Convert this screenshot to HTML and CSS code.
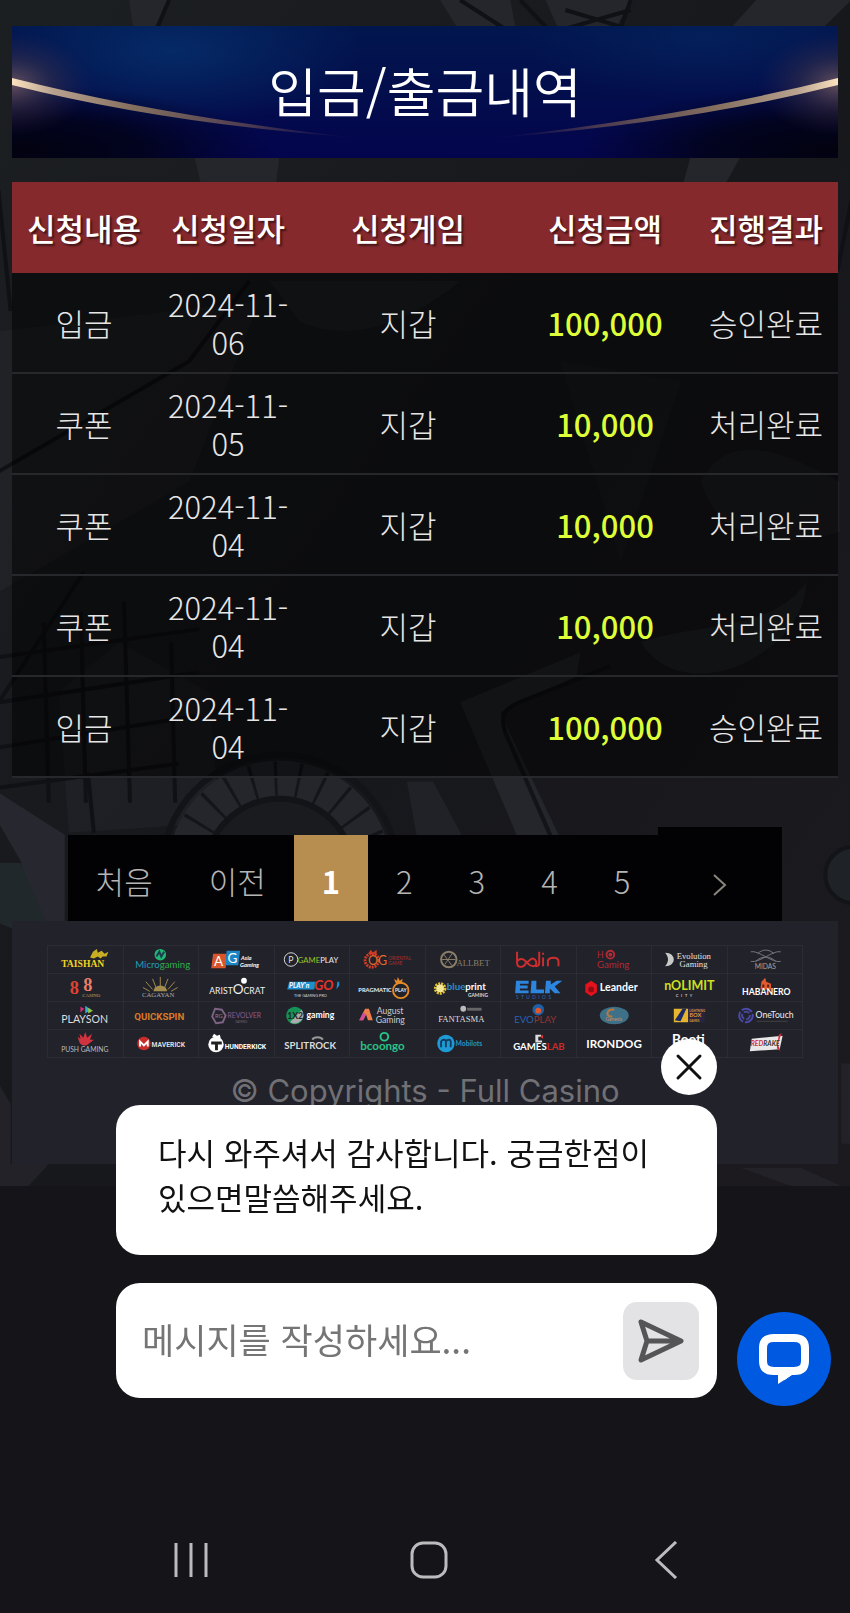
FILE: index.html
```html
<!DOCTYPE html>
<html lang="ko">
<head>
  <meta charset="UTF-8">
  <meta name="viewport" content="width=device-width, initial-scale=1">
  <title>입금/출금내역 - Full Casino</title>
  <link rel="stylesheet" href="styles.css">
</head>
<body>
  <div class="page">
    <!-- 배경 그림 -->
    <svg class="page-bg" viewBox="0 0 850 1182" preserveAspectRatio="xMidYMin slice" aria-hidden="true">
      <defs>
        <linearGradient id="bgShade" x1="0" y1="0" x2="1" y2="1">
          <stop offset="0" stop-color="#1c1f22"/>
          <stop offset="0.5" stop-color="#17181c"/>
          <stop offset="1" stop-color="#1c1a1e"/>
        </linearGradient>
      </defs>
      <rect width="850" height="1182" fill="url(#bgShade)"/>
      <g fill="#24262b">
        <path d="M130 0h40l-18 40h-16z"/>
        <path d="M440 0h70l8 42h-52z"/>
        <path d="M545 0h85l-22 42h-44z"/>
        <path d="M755 0l-38 42h90l43-42z"/>
        <path d="M195 155h85l-5 40-70 2z"/>
        <path d="M690 155l50 0-20 36h-40z"/>
        <path d="M0 590L190 480 260 300 0 330z" opacity=".6"/>
        <path d="M270 280h190c-60 50-120 60-160 40z" opacity=".7"/>
        <path d="M60 690l60-50 90 50 10 130-150 10z" opacity=".5"/>
        <path d="M560 360l120 20-60 180z" opacity=".4"/>
        <path d="M640 640c60-20 130-10 165-60 0 70-120 130-165 60z" opacity=".9"/>
        <path d="M700 480c30-60 100-20 138 0v50c-60 20-120 10-138-50z" opacity=".6"/>
        <path d="M460 700l120-50-4 24-76 36 60 126h-42z"/>
        <path d="M0 790l66 42 0 88H40L22 858 0 820z" fill="#26272f"/>
        <path d="M0 860h22l26 62-12 12L0 920z" fill="#20282b"/>
        <path d="M433 779l30 56h-46l-10-56z" fill="#202228"/>
      </g>
      <g fill="none" stroke="#101114" stroke-width="4">
        <path d="M170 0l-18 42M460 0l62 40M520 0l40 42M565 10l60 18M560 30l70-20M630 0l-15 42M0 190l12 120M850 200l-14 70"/>
        <path d="M85 570l-85 130M45 620l5 180M82 610l5 190M125 600l6 200M172 640l4 160M0 655l200-28M0 700l200-30M0 745l200-32M0 785l180-24M95 830l-6-60"/>
        <path d="M0 470l190-110 60-80M505 730c-6-18 0-24 14-30l90-36"/>
        <path d="M505 730l46 105" stroke="#131417"/>
      </g>
      <circle cx="280" cy="870" r="112" fill="#24262c"/>
      <circle cx="280" cy="870" r="94" fill="none" stroke="#14151a" stroke-width="34" stroke-dasharray="3 20"/>
      <circle cx="280" cy="870" r="118" fill="none" stroke="#131417" stroke-width="6"/>
      <circle cx="280" cy="870" r="74" fill="#1a1b1e" stroke="#131417" stroke-width="6"/>
      <circle cx="852" cy="872" r="28" fill="#1f2226" stroke="#131417" stroke-width="4"/>
      <path d="M0 1080l12 20v60H0zM840 1060h10v80h-10zM740 1164l60 0 40 18h-50zM0 1160h50l-20 22H0z" fill="#222228"/>
    </svg>

    <header class="banner">
      <svg class="banner-bg" viewBox="0 0 826 132" preserveAspectRatio="none" aria-hidden="true">
        <defs>
          <linearGradient id="navy" x1="0" y1="0" x2="0" y2="1">
            <stop offset="0" stop-color="#02164e"/>
            <stop offset="0.55" stop-color="#030d4c"/>
            <stop offset="1" stop-color="#03044e"/>
          </linearGradient>
          <radialGradient id="blueGlow">
            <stop offset="0" stop-color="#052a66"/>
            <stop offset="1" stop-color="#052a66" stop-opacity="0"/>
          </radialGradient>
          <radialGradient id="dark">
            <stop offset="0" stop-color="#02020f"/>
            <stop offset="0.5" stop-color="#02031a" stop-opacity=".9"/>
            <stop offset="1" stop-color="#02041f" stop-opacity="0"/>
          </radialGradient>
          <radialGradient id="warm">
            <stop offset="0" stop-color="#8d6c66" stop-opacity=".7"/>
            <stop offset="0.5" stop-color="#4a3a48" stop-opacity=".4"/>
            <stop offset="1" stop-color="#33264a" stop-opacity="0"/>
          </radialGradient>
          <linearGradient id="beam" x1="0" y1="0" x2="1" y2="0">
            <stop offset="0" stop-color="#fbe3c0"/>
            <stop offset="0.12" stop-color="#b8a18e"/>
            <stop offset="0.35" stop-color="#85705f"/>
            <stop offset="0.7" stop-color="#4a3950"/>
            <stop offset="1" stop-color="#2b1c55" stop-opacity="0"/>
          </linearGradient>
          <g id="side">
            <ellipse cx="0" cy="125" rx="260" ry="66" fill="url(#dark)"/>
            <ellipse cx="0" cy="58" rx="80" ry="52" fill="url(#warm)"/>
            <path d="M0 52Q150 90 345 112Q150 97 0 59z" fill="url(#beam)"/>
          </g>
        </defs>
        <rect width="826" height="132" fill="url(#navy)"/>
        <ellipse cx="160" cy="25" rx="190" ry="75" fill="url(#blueGlow)"/>
        <ellipse cx="690" cy="15" rx="180" ry="60" fill="url(#blueGlow)" opacity=".5"/>
        <use href="#side"/>
        <use href="#side" transform="translate(826 0) scale(-1 1)"/>
      </svg>
      <h1>입금/출금내역</h1>
    </header>

    <!-- 신청 내역 -->
    <table class="history">
      <colgroup>
        <col class="col-type"><col class="col-date"><col class="col-game"><col class="col-amount"><col class="col-result">
      </colgroup>
      <thead>
        <tr><th>신청내용</th><th>신청일자</th><th>신청게임</th><th>신청금액</th><th>진행결과</th></tr>
      </thead>
      <tbody>
        <tr><td>입금</td><td>2024-11-06</td><td>지갑</td><td class="amount">100,000</td><td>승인완료</td></tr>
        <tr><td>쿠폰</td><td>2024-11-05</td><td>지갑</td><td class="amount">10,000</td><td>처리완료</td></tr>
        <tr><td>쿠폰</td><td>2024-11-04</td><td>지갑</td><td class="amount">10,000</td><td>처리완료</td></tr>
        <tr><td>쿠폰</td><td>2024-11-04</td><td>지갑</td><td class="amount">10,000</td><td>처리완료</td></tr>
        <tr><td>입금</td><td>2024-11-04</td><td>지갑</td><td class="amount">100,000</td><td>승인완료</td></tr>
      </tbody>
    </table>

    <!-- 페이지 이동 -->
    <nav class="pagination" aria-label="페이지">
      <a href="#">처음</a>
      <a href="#">이전</a>
      <a href="#" class="active">1</a>
      <a href="#">2</a>
      <a href="#">3</a>
      <a href="#">4</a>
      <a href="#">5</a>
      <a href="#" class="next" aria-label="다음">
        <svg width="14" height="24" viewBox="0 0 14 24"><path d="M1 2l11 10L1 22" fill="none" stroke="#8c857c" stroke-width="2"/></svg>
      </a>
    </nav>

    <footer class="footer">
      <!-- 제휴사 로고 -->
      <div class="partners">
        <svg viewBox="0 0 76 28"><g fill="#f3d321"><path d="M43 12l3-6 4-3 1 4 4-2 3 3 4-2-2 5-4 0-2 2-3-2-4 2z" opacity=".8"/><text x="13" y="22" class="serif bold" font-size="10">TAISHAN</text></g></svg>
        <svg viewBox="0 0 76 28"><circle cx="37" cy="9" r="6" fill="#23b574"/><path d="M33 11l3-5 2 5 3-5" fill="none" stroke="#1b3c50" stroke-width="2"/><text x="11" y="23" font-size="10" fill="#1f9fb5">Micro<tspan fill="#2fae4c">gaming</tspan></text></svg>
        <svg viewBox="0 0 76 28"><path d="M14 8h14l-1 15H12z" fill="#d9552b"/><path d="M28 5h14l-2 15H27z" fill="#1c86c4"/><g fill="#fff"><text x="15" y="21" font-size="14">A</text><text x="29" y="18" font-size="14">G</text><g class="bold" font-size="6" font-style="italic"><text x="43" y="15">Asia</text><text x="42" y="22">Gaming</text></g></g></svg>
        <svg viewBox="0 0 76 28"><circle cx="16" cy="14" r="7" fill="none" stroke="#ddd"/><text x="13" y="18" font-size="9" fill="#ddd">P</text><text x="23" y="18" font-size="8" fill="#9fc31f">GAME<tspan fill="#eee">PLAY</tspan></text></svg>
        <svg viewBox="0 0 76 28"><circle cx="22" cy="15" r="7" fill="none" stroke="#d13b26" stroke-width="3" stroke-dasharray="2 1"/><path d="M18 8l3-4 2 3 4-3v5z" fill="#d13b26"/><text x="18" y="20" font-size="13" fill="#df6a2a">OG</text><g font-size="5" fill="#a8302a"><text x="39" y="14">ORIENTAL</text><text x="39" y="20">GAME</text></g></svg>
        <svg viewBox="0 0 76 28"><g fill="none" stroke="#8a7f67"><circle cx="23" cy="14" r="8" stroke-width="2"/><path d="M18 9l8 11M27 7l-8 12M16 14h14"/></g><text x="31" y="21" class="serif" font-size="9" fill="#8a7f67">ALLBET</text></svg>
        <svg viewBox="0 0 76 28"><g fill="none" stroke="#cf2e2e" stroke-width="2"><path d="M16 6v11c0 6 7 6 9 1l5-4c5-4 9 6 3 7-5 0-5-3-9-6-3-3-8-1-8 2M39 6v11c0 3-1 4-4 4M43 12v9M48 21v-6c2-4 11-4 11 1v5M43 7v2"/></g></svg>
        <svg viewBox="0 0 76 28"><g fill="#b12a33"><text x="20" y="12" font-size="9">H</text><circle cx="34" cy="9" r="4" fill="none" stroke="#b12a33" stroke-width="2"/><circle cx="34" cy="9" r="2"/><text x="20" y="23" font-size="10">Gaming</text></g></svg>
        <svg viewBox="0 0 76 28"><path d="M13 7c12 0 12 14 0 14 4-5 4-9 0-14z" fill="#c9c9c9"/><g class="serif" font-size="9" fill="#e2e2e2"><text x="25" y="13">Evolution</text><text x="28" y="22">Gaming</text></g></svg>
        <svg viewBox="0 0 76 28"><g fill="none" stroke="#77777b"><path d="M23 6c8-2 22 12 31 10M54 6c-8-2-22 12-31 10M30 8c5-5 12-5 17 0M28 16c6-6 15-6 21 0"/></g><text x="27" y="24" font-size="7" fill="#a5a5a5">MIDAS</text></svg>

        <svg viewBox="0 0 76 28"><text x="22" y="21" class="serif bold" font-size="19" fill="#e0432f">8</text><text x="36" y="18" class="serif bold" font-size="19" fill="#ec7d67">8</text><text x="35" y="24" class="serif" font-size="5" fill="#c5a35c">CASINO</text></svg>
        <svg viewBox="0 0 76 28"><path d="M26 18l-7-4M29 16l-7-8M33 15l-4-10M37 14V3M41 15l4-10M45 16l7-8M48 18l7-4" stroke="#a38c4e"/><path d="M30 18a7 6 0 0 1 14 0z" fill="#a38c4e"/><text x="18" y="24" class="serif" font-size="7" fill="#aaa">CAGAYAN</text></svg>
        <svg viewBox="0 0 76 28"><circle cx="46" cy="7" r="3" fill="#fff"/><text x="10" y="21" font-size="9" fill="#eee">ARIST<tspan font-size="14">O</tspan>CRAT</text></svg>
        <svg viewBox="0 0 76 28"><path d="M14 8h28l-2 8H12z" fill="#1d8fce"/><text x="14" y="15" class="bold" font-size="7" font-style="italic" fill="#fff">PLAY'n</text><text x="40" y="17" class="bold" font-size="14" font-style="italic" fill="#e6332a">GO</text><path d="M64 8l2 0 0 4-3 4z" fill="#1d8fce"/><text x="19" y="24" font-size="4" fill="#ddd">THE GAMING PRO</text></svg>
        <svg viewBox="0 0 76 28"><text x="8" y="19" class="bold" font-size="6" fill="#eee">PRAGMATIC</text><circle cx="52" cy="17" r="8" fill="none" stroke="#e58a24" stroke-width="2"/><path d="M45 5l3 2 1-4 2 4 3-2-1 5h-6z" fill="#e58a24"/><text x="46" y="19" class="bold" font-size="5" fill="#eee">PLAY</text></svg>
        <svg viewBox="0 0 76 28"><circle cx="14" cy="15" r="5" fill="none" stroke="#e2c52e" stroke-width="3" stroke-dasharray="2 1"/><circle cx="14" cy="15" r="4" fill="#f3e796"/><text x="21" y="17" class="bold" font-size="10" fill="#2d8fc9">blue<tspan fill="#fff">print</tspan></text><text x="43" y="24" class="bold" font-size="5" fill="#ddd">GAMING</text></svg>
        <svg viewBox="0 0 76 28"><path d="M15 7h13v3H19v2h8v3h-8v2h9v3H14zM31 7h5v9h8v4H30zM46 7h5v4l6-4h6l-8 6 6 7h-6l-5-5v5h-5z" fill="#2c86e0"/><text x="15" y="26" font-size="5" fill="#276fb5">S &#160;T &#160;U &#160;D &#160;I &#160;O &#160;S</text></svg>
        <svg viewBox="0 0 76 28"><path d="M8 11l6-4 6 4v8l-6 4-6-4z" fill="#e4121c"/><circle cx="14" cy="16" r="3" fill="#8f0d14"/><text x="23" y="18" class="bold" font-size="11" fill="#fff">Leander</text></svg>
        <svg viewBox="0 0 76 28"><text x="12" y="17" font-size="13" class="bold" fill="#cfe01e">nOLIMIT</text><text x="24" y="24" class="bold" font-size="4" fill="#ccc">C &#160; I &#160; T &#160; Y</text></svg>
        <svg viewBox="0 0 76 28"><path d="M34 8l4-4 1 4 5 2v6H33z" fill="#e2592c"/><path d="M35 11h2v3h-2zM40 11h2v3h-2z" fill="#5b1e16"/><text x="14" y="22" class="bold" font-size="9" fill="#fff">HABANERO</text></svg>

        <svg viewBox="0 0 76 28"><path d="M33 5l4 2-4 4z" fill="#df2a7b"/><path d="M38 4l6 4-6 4z" fill="#37a9dc"/><path d="M41 6l5 3-5 3z" fill="#90c73e"/><text x="13" y="22" font-size="11" fill="#ddd">PLAYSON</text></svg>
        <svg viewBox="0 0 76 28"><text x="10" y="19" font-size="10" class="roboto" fill="#dc7a25">QUICKSPIN</text></svg>
        <svg viewBox="0 0 76 28"><path d="M16 7l7 1 4 6-3 7-7 1-4-7z" fill="none" stroke="#7d6384" stroke-width="2"/><text x="16" y="17" font-size="6" fill="#9a7aa0">RG</text><text x="29" y="17" font-size="7" fill="#8e5b8b">REVOLVER</text><text x="37" y="22" font-size="3" fill="#77677a">GAMING</text></svg>
        <svg viewBox="0 0 76 28"><circle cx="20" cy="14" r="9" fill="#159256"/><path d="M27 8a9 9 0 0 1-12 13z" fill="#ababad"/><text x="12" y="18" class="bold" font-size="9" fill="#222">1X2</text><text x="32" y="17" class="bold" font-size="9" fill="#fff">gaming</text></svg>
        <svg viewBox="0 0 76 28"><path d="M9 19l6-12h4l4 12h-5l-2-6-3 6z" fill="#ef7f4a"/><path d="M9 19l4-8 3 2-3 6z" fill="#cf4d9b"/><g font-size="9" fill="#ccc"><text x="27" y="12">August</text><text x="26" y="22">Gaming</text></g></svg>
        <svg viewBox="0 0 76 28"><circle cx="38" cy="7" r="3" fill="#bbb"/><path d="M42 6h15v3H42z" fill="#666"/><text x="12" y="21" class="serif" font-size="9" fill="#ddd">FANTASMA</text></svg>
        <svg viewBox="0 0 76 28"><circle cx="38" cy="8" r="6" fill="#1d60a8"/><circle cx="38" cy="9" r="3" fill="#e2572a"/><text x="13" y="22" font-size="10" fill="#2a63b0">EVO<tspan fill="#97332f">PLAY</tspan></text></svg>
        <svg viewBox="0 0 76 28"><ellipse cx="38" cy="14" rx="15" ry="9" fill="#3e7188"/><path d="M38 8c-8-2-10 8-2 7" fill="none" stroke="#b9793f" stroke-width="2"/><text x="29" y="20" font-size="5" fill="#c98f5e">Genesis</text></svg>
        <svg viewBox="0 0 76 28"><path d="M22 7h15v14H22z" fill="#e7b52d"/><path d="M23 19l8-12 4 0-6 13z" fill="#1b2a66"/><path d="M37 6h17v15H37z" fill="#2a2440"/><g class="bold" fill="#d9972c"><text x="38" y="10" font-size="3">LIGHTNING</text><text x="38" y="16" font-size="6">BOX</text><text x="38" y="21" font-size="3">GAMES</text></g></svg>
        <svg viewBox="0 0 76 28"><g fill="none" stroke="#4b4aa6" stroke-width="2"><circle cx="18" cy="14" r="7" stroke-dasharray="12 2"/><circle cx="18" cy="14" r="4" stroke-dasharray="6 2"/></g><text x="28" y="17" font-size="9" fill="#eee">OneTouch</text><path d="M29 20h32" stroke="#444"/></svg>

        <svg viewBox="0 0 76 28"><path d="M30 7l3 2-1-5 4 4 2-6 2 6 5-4-2 6 4 0-5 4c-3 3-8 3-10-1z" fill="#cf3340"/><text x="13" y="23" font-size="7" fill="#bbb">PUSH GAMING</text></svg>
        <svg viewBox="0 0 76 28"><circle cx="20" cy="14" r="7" fill="#c92d2a"/><path d="M16 17v-5l4 4 4-4v5" fill="none" stroke="#fff" stroke-width="2"/><text x="28" y="18" class="roboto" font-size="7" fill="#ddd">MAVERICK</text></svg>
        <svg viewBox="0 0 76 28"><circle cx="17" cy="15" r="8" fill="#fff"/><path d="M13 7l2-3 3 2 3-1 1 4z" fill="#fff"/><path d="M12 12h11v3h-4v6h-3v-6h-4z" fill="#222"/><text x="26" y="20" class="roboto" font-size="7" fill="#fff">HUNDERKICK</text></svg>
        <svg viewBox="0 0 76 28"><path d="M38 10a6 4 0 0 1 11 0" fill="none" stroke="#999" stroke-width="2"/><text x="9" y="20" class="bold" font-size="10" fill="#ddd">SPLITROCK</text></svg>
        <svg viewBox="0 0 76 28"><text x="10" y="21" class="bold" font-size="12" fill="#27c486">bcoongo</text><circle cx="35" cy="7" r="4" fill="none" stroke="#27c486" stroke-width="2"/></svg>
        <svg viewBox="0 0 76 28"><circle cx="20" cy="14" r="9" fill="#1e9bd4"/><path d="M15 18v-6c2-3 5-2 5 0v6M20 12c2-3 5-2 5 0v6" fill="none" stroke="#143d63" stroke-width="2"/><text x="30" y="17" class="bold" font-size="7" fill="#2196c9">Mobilots</text></svg>
        <svg viewBox="0 0 76 28"><path d="M35 5h6v2h-3v4h4v2h-7z" fill="#ddd"/><path d="M40 7l3-2v4z" fill="#d33"/><text x="12" y="21" class="bold" font-size="10" fill="#fff">GAMES<tspan fill="#c92d2a">LAB</tspan></text></svg>
        <svg viewBox="0 0 76 28"><text x="9" y="19" class="bold" font-size="12" fill="#fff">IRONDOG</text></svg>
        <svg viewBox="0 0 76 28"><text x="20" y="15" class="bold" font-size="14" fill="#fff">Booti</text></svg>
        <svg viewBox="0 0 76 28"><path d="M24 9l32-3-3 14-31 2z" fill="#e8e8e8"/><path d="M52 5l3-2-4 12 3 7-4-3z" fill="#d32f3b"/><text x="23" y="17" class="bold" font-size="7" font-style="italic" fill="#d32f3b">RED<tspan fill="#333">RAKE</tspan></text></svg>
      </div>
      <p class="copyright">© Copyrights - Full Casino</p>
    </footer>
  </div>

  <!-- 채팅 위젯 -->
  <section class="chat" aria-label="채팅">
    <button type="button" class="chat-close" aria-label="닫기">
      <svg width="28" height="28" viewBox="0 0 28 28"><path d="M3 3l22 22M25 3L3 25" stroke="#111" stroke-width="3" stroke-linecap="round"/></svg>
    </button>
    <p class="chat-message">다시 와주셔서 감사합니다. 궁금한점이 있으면말씀해주세요.</p>
    <form class="chat-form">
      <input type="text" aria-label="메시지" placeholder="메시지를 작성하세요...">
      <button type="button" class="chat-send" aria-label="보내기">
        <svg width="48" height="44" viewBox="0 0 48 44"><path d="M4 3l40 19L4 41l6-19zM10 22h30" fill="none" stroke="#555557" stroke-width="5" stroke-linejoin="round"/></svg>
      </button>
    </form>
  </section>
  <button type="button" class="chat-launcher" aria-label="채팅 열기">
    <svg width="50" height="50" viewBox="0 0 50 50"><path d="M20 37h-5C8 37 4 34 4 27V14C4 7 8 4 15 4h20c7 0 11 3 11 10v13c0 7-4 10-11 10h-4l-8 6" fill="none" stroke="#fff" stroke-width="8"/><path d="M19 33l0 17 14-9-2-8z" fill="#fff"/><path d="M8 41h11v9H8z" fill="#0059e1"/></svg>
  </button>

  <nav class="system-bar" aria-label="시스템">
    <button type="button" aria-label="최근 앱"><svg width="38" height="38" viewBox="0 0 38 38"><path d="M4 2v34M19 2v34M34 2v34" stroke-width="3"/></svg></button>
    <button type="button" aria-label="홈"><svg width="38" height="38" viewBox="0 0 38 38"><rect x="2" y="2" width="34" height="34" rx="11" stroke-width="3"/></svg></button>
    <button type="button" aria-label="뒤로"><svg width="38" height="38" viewBox="0 0 38 38"><path d="M28 1L9 19l19 18" stroke-width="3"/></svg></button>
  </nav>
</body>
</html>
```
FILE: styles.css
```css
* {
  box-sizing: border-box;
}
body {
  margin: 0;
  min-height: 100vh;
  background-color: #141419;
  color: #e6e6e6;
  font-family: "Noto Sans CJK KR", sans-serif;
  font-size: 31px;
  font-weight: 300;
  line-height: 38px;
}
button {
  display: flex;
  align-items: center;
  justify-content: center;
  padding: 0;
  border: 0;
  cursor: pointer;
}
a {
  color: inherit;
  text-decoration: none;
}

/* page */
.page {
  position: relative;
  padding: 26px 12px 22px;
  overflow: hidden;
}
.page-bg {
  position: absolute;
  inset: 0;
  width: 100%;
  height: 100%;
  z-index: -1;
}

.banner {
  position: relative;
  display: flex;
  align-items: center;
  justify-content: center;
  height: 132px;
  margin-bottom: 24px;
  padding-bottom: 4px;
}
.banner-bg {
  position: absolute;
  inset: 0;
  width: 100%;
  height: 100%;
}
.banner h1 {
  position: relative;
  margin: 0;
  color: #fff;
  font-size: 53px;
  font-weight: 350;
  line-height: 76px;
}

/* history table */
.history {
  width: 100%;
  border-collapse: collapse;
  table-layout: fixed;
  text-align: center;
}
.col-type, .col-date, .col-result {
  width: 144px;
}
.col-amount {
  width: 178px;
}
.history th {
  height: 91px;
  padding: 0;
  background-color: #85292d;
  color: #fff;
  font-weight: 500;
  text-shadow: 2px 2px 2px rgba(0,0,0,0.5);
}
.history td {
  padding: 12px 8px 11px;
  background-color: rgba(0,0,0,0.5);
  border-bottom: 2px solid #27282b;
}
.history .amount {
  color: #deff37;
  font-weight: 500;
}

/* pagination */
.pagination {
  display: flex;
  justify-content: center;
  align-items: flex-end;
  margin-top: 49px;
  color: #b5b5b5;
}
.pagination a {
  padding: 27px 28px 21px;
  background-color: #020205;
}
.pagination .active {
  background-color: #b88d50;
  color: #fff;
  font-weight: 700;
}
.pagination .next {
  display: flex;
  align-items: center;
  justify-content: center;
  width: 124px;
  height: 94px;
  padding: 22px 0 0;
}

/* footer */
.footer {
  padding: 24px 35px 54px;
  background-color: #22222b;
}
.partners {
  display: grid;
  grid-template-columns: repeat(10, 1fr);
  border-top: 1px solid #2c2c34;
  border-left: 1px solid #2c2c34;
}
.partners svg {
  width: 100%;
  height: 28px;
  border-right: 1px solid #2c2c34;
  border-bottom: 1px solid #2c2c34;
  font-family: Lato, sans-serif;
  font-weight: 400;
}
.partners .bold {
  font-weight: 700;
}
.partners .serif {
  font-family: "Liberation Serif", serif;
}
.partners .roboto {
  font-family: Roboto, sans-serif;
  font-weight: 700;
}
.copyright {
  margin: 14px 0 0;
  color: #707075;
  font-family: Inter, sans-serif;
  font-size: 31px;
  font-weight: 400;
  text-align: center;
}

/* chat widget */
.chat {
  position: fixed;
  right: 133px;
  bottom: 215px;
  left: 116px;
  color: #111;
}
.chat-close {
  width: 56px;
  height: 56px;
  margin: 0 0 10px auto;
  border-radius: 50%;
  background-color: #fff;
}
.chat-message {
  margin: 0 0 28px;
  padding: 24px 42px 36px;
  border-radius: 24px;
  background-color: #fff;
  font-size: 31px;
  font-weight: 400;
  line-height: 45px;
}
.chat-form {
  display: flex;
  align-items: center;
  height: 115px;
  padding: 0 18px 0 26px;
  border-radius: 24px;
  background-color: #fff;
}
.chat-form input {
  flex: 1;
  min-width: 0;
  padding: 0 0 4px;
  border: 0;
  outline: 0;
  background: none;
  color: #111;
  font: 400 35px/52px "Noto Sans CJK KR", sans-serif;
}
.chat-form input::placeholder {
  color: #757575;
}
.chat-send {
  width: 76px;
  height: 78px;
  border-radius: 14px;
  background-color: #e3e3e6;
}
.chat-launcher {
  position: fixed;
  right: 19px;
  bottom: 207px;
  width: 94px;
  height: 94px;
  border-radius: 50%;
  background-color: #0059e1;
}

/* system bar */
.system-bar {
  position: fixed;
  right: 0;
  bottom: 34px;
  left: 0;
  display: flex;
  justify-content: space-around;
  padding: 0 64px 0 72px;
}
.system-bar button {
  background: none;
}
.system-bar svg {
  fill: none;
  stroke: #bdbbbe;
}
```
